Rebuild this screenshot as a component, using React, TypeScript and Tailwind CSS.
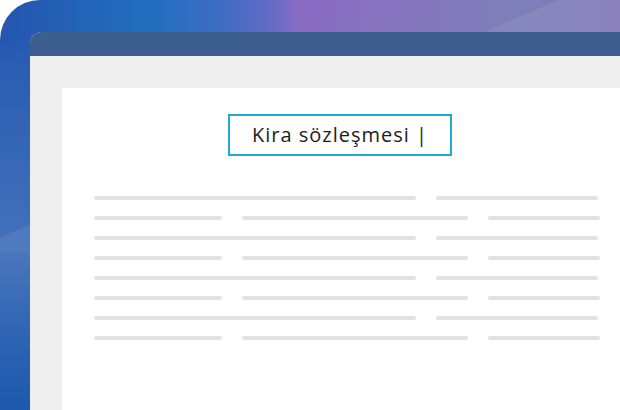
const rows = [0, 1, 2, 3, 4, 5, 6, 7];

function Bar({ w }: { w: string }) {
  return <div className={`h-[4px] rounded-full bg-[#e2e2e2] ${w}`} />;
}

export default function App() {
  return (
    <div className="h-[410px] w-[620px] overflow-hidden bg-white">
      <div className="h-full w-full rounded-tl-[40px] bg-[linear-gradient(157deg,transparent_218px,rgba(255,255,255,0.07)_219px),linear-gradient(to_bottom,rgba(36,86,176,0)_34px,#2a5cb2_60px,#4372b9_250px,#3a6ab6_256px,#1d58ad_340px,#0d4ca7_410px),linear-gradient(to_right,#2555b0_0px,#216fbf_150px,#3d6cc3_220px,#5d6cc6_265px,#8a6bc4_300px,#8476bd_420px,#7d7fb8_520px,#8479b9_620px)] bg-no-repeat [background-size:100%_100%,40px_100%,100%_100%] pt-[32px] pl-[30px]">
        <div className="flex h-full flex-col overflow-hidden rounded-tl-[12px] bg-[#eeeeee]">
          <div className="h-[24px] shrink-0 bg-[#3c5e8e]" />
          <div className="flex-1 pl-[32px] pt-[32px]">
            <div className="flex h-full flex-col bg-white">
              <div className="flex justify-center pt-[26px] pr-[2px]">
                <div className="flex h-[42px] w-[224px] items-center justify-center border-2 border-[#1fa8da] font-['Open_Sans',sans-serif] text-[20px] tracking-[1px] text-[#1c1c1c]">
                  Kira sözleşmesi |
                </div>
              </div>
              <div className="mt-[40px] flex flex-col gap-[16px] pl-[32px]">
                {rows.map((i) =>
                  i % 2 === 0 ? (
                    <div key={i} className="flex gap-[20px]">
                      <Bar w="w-[322px]" />
                      <Bar w="w-[162px]" />
                    </div>
                  ) : (
                    <div key={i} className="flex gap-[20px]">
                      <Bar w="w-[128px]" />
                      <Bar w="w-[226px]" />
                      <Bar w="w-[112px]" />
                    </div>
                  )
                )}
              </div>
            </div>
          </div>
        </div>
      </div>
    </div>
  );
}
